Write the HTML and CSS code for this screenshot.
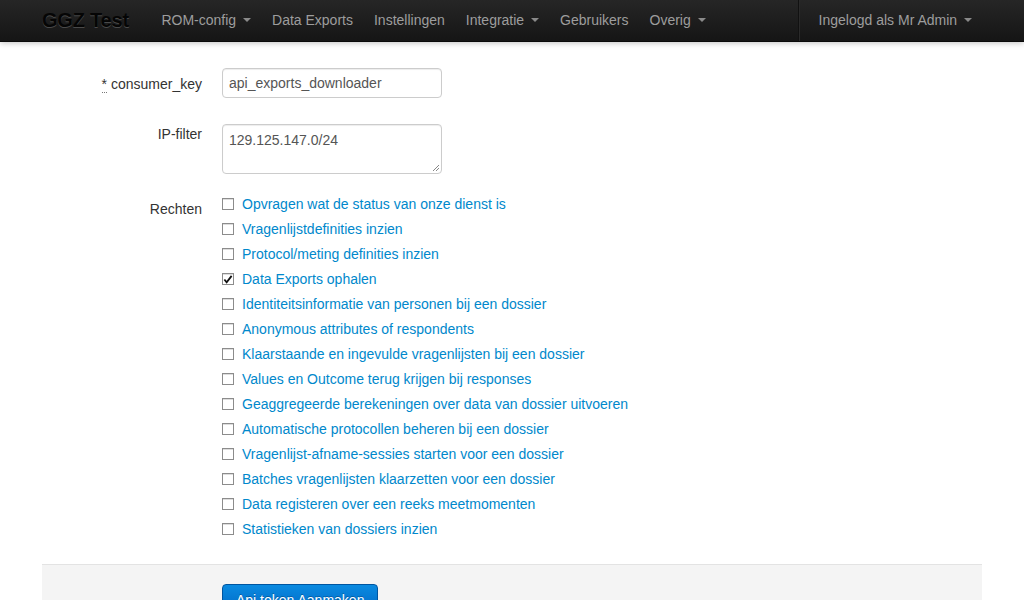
FILE: index.html
```html
<!DOCTYPE html>
<html lang="nl">
<head>
<meta charset="utf-8">
<title>GGZ Test</title>
<link rel="stylesheet" href="styles.css">
</head>
<body>
<header class="navbar">
  <div class="nav-inner">
    <a class="brand">GGZ Test</a>
    <nav class="nav">
      <a class="nav-link">ROM-config <span class="caret"></span></a>
      <a class="nav-link">Data Exports</a>
      <a class="nav-link">Instellingen</a>
      <a class="nav-link">Integratie <span class="caret"></span></a>
      <a class="nav-link">Gebruikers</a>
      <a class="nav-link">Overig <span class="caret"></span></a>
    </nav>
    <nav class="nav nav-right">
      <a class="nav-link">Ingelogd als Mr Admin <span class="caret"></span></a>
    </nav>
  </div>
</header>

<main class="container">
  <form class="form-horizontal">
    <div class="group group-key">
      <label class="control-label label-key"><abbr title="verplicht">*</abbr> consumer_key</label>
      <div class="controls">
        <div class="input">api_exports_downloader</div>
      </div>
    </div>
    <div class="group group-ip">
      <label class="control-label label-ip">IP-filter</label>
      <div class="controls">
        <div class="textarea">129.125.147.0/24
          <svg class="grip" width="7" height="7" viewBox="0 0 7 7"><path d="M1 7L7 1M4 7L7 4" stroke="#888" stroke-width="1" fill="none"/></svg>
        </div>
      </div>
    </div>
    <div class="group group-rights">
      <label class="control-label label-rights">Rechten</label>
      <ul class="controls checks">
        <li><span class="box"></span><span class="text">Opvragen wat de status van onze dienst is</span></li>
        <li><span class="box"></span><span class="text">Vragenlijstdefinities inzien</span></li>
        <li><span class="box"></span><span class="text">Protocol/meting definities inzien</span></li>
        <li><span class="box checked"><svg width="11" height="11" viewBox="0 0 11 11"><path d="M1.5 5.5L4 8.5L9.5 1.5" stroke="#111" stroke-width="2" fill="none"/></svg></span><span class="text">Data Exports ophalen</span></li>
        <li><span class="box"></span><span class="text">Identiteitsinformatie van personen bij een dossier</span></li>
        <li><span class="box"></span><span class="text">Anonymous attributes of respondents</span></li>
        <li><span class="box"></span><span class="text">Klaarstaande en ingevulde vragenlijsten bij een dossier</span></li>
        <li><span class="box"></span><span class="text">Values en Outcome terug krijgen bij responses</span></li>
        <li><span class="box"></span><span class="text">Geaggregeerde berekeningen over data van dossier uitvoeren</span></li>
        <li><span class="box"></span><span class="text">Automatische protocollen beheren bij een dossier</span></li>
        <li><span class="box"></span><span class="text">Vragenlijst-afname-sessies starten voor een dossier</span></li>
        <li><span class="box"></span><span class="text">Batches vragenlijsten klaarzetten voor een dossier</span></li>
        <li><span class="box"></span><span class="text">Data registeren over een reeks meetmomenten</span></li>
        <li><span class="box"></span><span class="text">Statistieken van dossiers inzien</span></li>
      </ul>
    </div>
    <div class="form-actions">
      <button type="button" class="btn">Api token Aanmaken</button>
    </div>
  </form>
</main>
</body>
</html>
```

FILE: styles.css
```css
* { box-sizing: border-box; }
html, body { margin: 0; padding: 0; }
body {
  font-family: "Liberation Sans", Arial, Helvetica, sans-serif;
  font-size: 14px;
  line-height: 20px;
  color: #333;
  background: #fff;
}

.navbar {
  height: 42px;
  background: linear-gradient(#262626, #151515);
  border-bottom: 1px solid #0a0a0a;
  box-shadow: 0 1px 6px rgba(0,0,0,0.25);
}
.nav-inner {
  width: 940px;
  margin: 0 auto;
  display: flex;
  align-items: stretch;
  height: 41px;
}
.brand {
  font-size: 20px;
  font-weight: bold;
  color: #050505;
  text-shadow: 0 1px 0 #4a4a4a;
  line-height: 41px;
  margin-right: 22px;
  letter-spacing: -0.2px;
}
.nav { display: flex; align-items: stretch; }
.nav-link {
  color: #9d9d9d;
  line-height: 41px;
  padding: 0 10.5px;
  white-space: nowrap;
  font-size: 14px;
}
.nav-right {
  margin-left: auto;
  border-left: 1px solid #111;
  box-shadow: inset 1px 0 0 #2a2a2a;
  padding-left: 9px;
  padding-right: 0;
}
.nav-right .nav-link { padding-right: 10px; }
.caret {
  display: inline-block;
  width: 0; height: 0;
  border-left: 4px solid transparent;
  border-right: 4px solid transparent;
  border-top: 4px solid #8a8a8a;
  vertical-align: middle;
  margin-left: 3px;
  position: relative;
  top: -1px;
}

.container { width: 940px; margin: 0 auto; }
.form-horizontal { padding-top: 26px; }
.group { display: flex; align-items: flex-start; }
.control-label {
  width: 160px;
  margin-right: 20px;
  text-align: right;
  color: #333;
}
.label-key { padding-top: 6px; }
.label-ip { padding-top: 0; }
.label-rights { padding-top: 5px; }
abbr { text-decoration: none; border-bottom: 1px dotted #777; cursor: help; }

.group-key { margin-bottom: 26px; }
.group-ip { margin-bottom: 20px; }

.input, .textarea {
  width: 220px;
  border: 1px solid #ccc;
  border-radius: 4px;
  color: #555;
  padding: 4px 6px;
  box-shadow: inset 0 1px 1px rgba(0,0,0,0.075);
  background: #fff;
}
.input { height: 30px; line-height: 20px; }
.textarea { height: 50px; position: relative; padding-top: 5px; }
.grip { position: absolute; right: 2px; bottom: 2px; }

.checks { list-style: none; margin: 0; padding: 0; }
.checks li {
  display: flex;
  align-items: center;
  height: 20px;
  margin-bottom: 5px;
}
.checks li:last-child { margin-bottom: 0; }
.box {
  width: 12px; height: 12px;
  border: 1px solid #8c8c8c;
  background: #fff;
  margin-right: 8px;
  display: flex;
  align-items: center;
  justify-content: center;
  box-shadow: inset 0 1px 0 #ddd;
}
.text { color: #0088cc; }

.form-actions {
  margin-top: 25px;
  padding: 19px 20px 20px 180px;
  background: #f4f4f4;
  border-top: 1px solid #e3e3e3;
}
.btn {
  font-family: "Liberation Sans", Arial, sans-serif;
  font-size: 14px;
  line-height: 20px;
  color: #fff;
  padding: 5px 13px;
  border: 1px solid #0055a0;
  border-radius: 4px;
  background: linear-gradient(#0a8ae0, #0066c4);
  text-shadow: 0 -1px 0 rgba(0,0,0,0.25);
  height: 32px;
}
```
